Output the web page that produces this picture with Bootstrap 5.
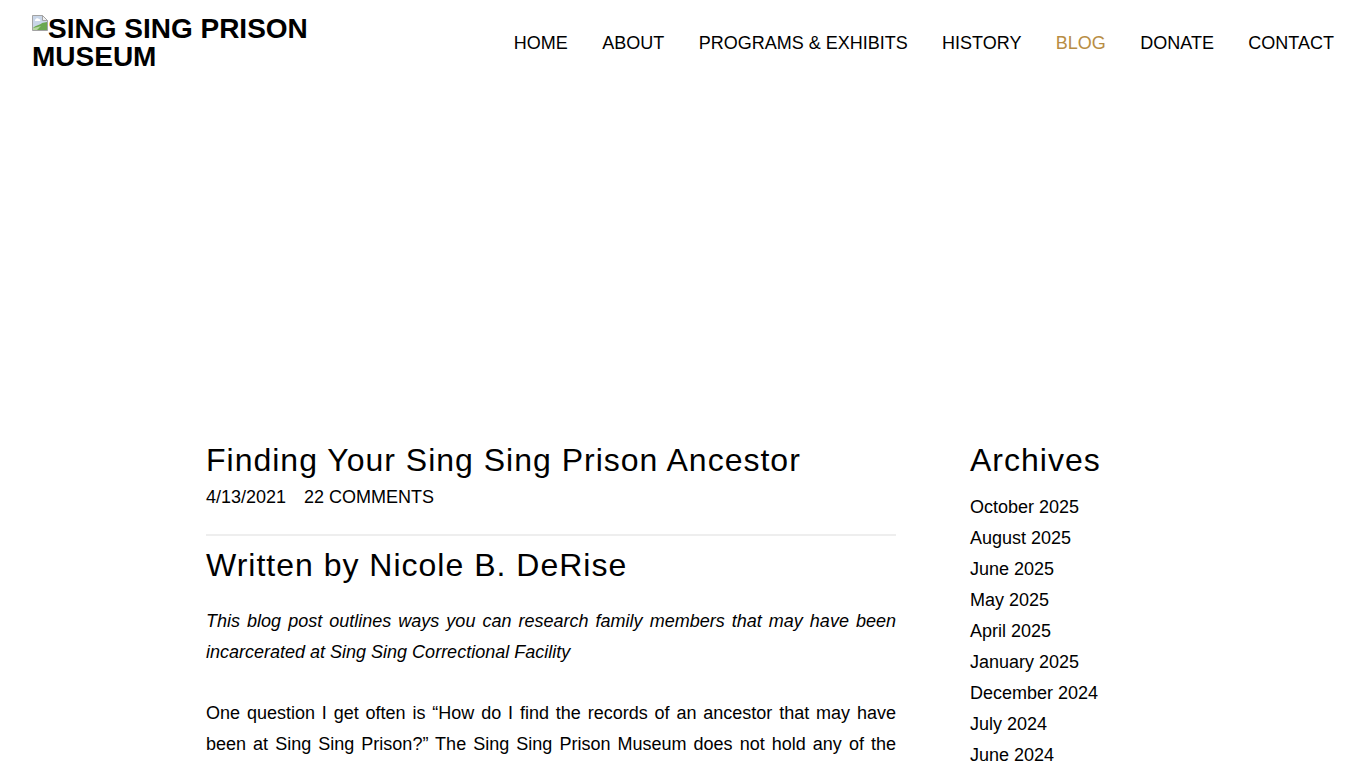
<!DOCTYPE html>
<html lang="en">
<head>
    <meta charset="UTF-8">
    <meta name="viewport" content="width=device-width, initial-scale=1.0">
    <title>Finding Your Sing Sing Prison Ancestor</title>
    <link href="https://cdn.jsdelivr.net/npm/bootstrap@5.3.2/dist/css/bootstrap.min.css" rel="stylesheet">
    <style>
        html, body {
            height: 768px;
            overflow: hidden;
        }
        body {
            font-family: "Liberation Sans", Arial, sans-serif;
            font-size: 18px;
            color: #000;
            background: #fff;
        }
        a {
            color: #000;
            text-decoration: none;
        }
        .site-head {
            height: 88px;
            padding: 15px 32px 0;
        }
        .site-logo {
            width: 300px;
            font-size: 28px;
            font-weight: 700;
            line-height: 28px;
            color: #000;
        }
        .site-logo svg {
            vertical-align: top;
        }
        .site-nav {
            gap: 34.4px;
            padding-top: 14px;
            line-height: 28px;
        }
        .site-nav .active-link {
            color: #b88d43;
        }
        .page-wrap {
            width: 954px;
            margin-left: 206px;
            padding-top: 352px;
        }
        .post-col {
            width: 690px;
        }
        .side-col {
            width: 190px;
        }
        .post-title {
            font-size: 32px;
            font-weight: 400;
            letter-spacing: 1px;
            line-height: 40px;
            margin: 0;
        }
        .post-meta {
            gap: 18px;
            line-height: 31px;
            margin-top: 2px;
            padding-bottom: 21px;
            border-bottom: 2px solid #eee;
        }
        .post-body {
            line-height: 31px;
            text-align: justify;
        }
        .post-body .post-title {
            margin: 9px 0 21px;
            text-align: left;
        }
        .post-body p {
            margin: 0 0 30px;
        }
        .post-body .para-cut {
            text-align-last: justify;
        }
        .archive-list {
            margin-top: 12px;
            line-height: 31px;
        }
    </style>
</head>
<body>
    <header class="site-head d-flex justify-content-between align-items-start">
        <a class="site-logo" href="#"><svg width="16" height="16" viewBox="0 0 16 16"><path d="M.5.5h10l5 5v10H.5z" fill="#c9d6e8" stroke="#a3a3a3"/><path d="M10.5.5v5h5z" fill="#f2f2f2" stroke="#a3a3a3"/><path d="M3 5c1-2 3-2 4-1 1 0 2 1 1 2H3z" fill="#fff"/><path d="M1 15v-2c3-3 7-3 9-5l5-1v8z" fill="#6aa84f"/><path d="M1 15v-2c3-1 6-1 8-2-2 2-3 3-4 4z" fill="#b5d6a0"/></svg>SING SING PRISON MUSEUM</a>
        <nav class="site-nav d-flex">
            <a href="#">HOME</a>
            <a href="#">ABOUT</a>
            <a href="#">PROGRAMS &amp; EXHIBITS</a>
            <a href="#">HISTORY</a>
            <a href="#" class="active-link">BLOG</a>
            <a href="#">DONATE</a>
            <a href="#">CONTACT</a>
        </nav>
    </header>

    <main class="page-wrap d-flex justify-content-between">
        <article class="post-col">
            <h2 class="post-title">Finding Your Sing Sing Prison Ancestor</h2>
            <div class="post-meta d-flex">
                <span>4/13/2021</span>
                <a href="#">22 COMMENTS</a>
            </div>
            <div class="post-body">
                <h2 class="post-title">Written by Nicole B. DeRise</h2>
                <p><em>This blog post outlines ways you can research family members that may have been incarcerated at Sing Sing Correctional Facility</em></p>
                <p class="para-cut">One question I get often is “How do I find the records of an ancestor that may have been at Sing Sing Prison?” The Sing Sing Prison Museum does not hold any of the</p>
            </div>
        </article>
        <aside class="side-col">
            <h2 class="post-title">Archives</h2>
            <div class="archive-list d-flex flex-column">
                <a href="#">October 2025</a>
                <a href="#">August 2025</a>
                <a href="#">June 2025</a>
                <a href="#">May 2025</a>
                <a href="#">April 2025</a>
                <a href="#">January 2025</a>
                <a href="#">December 2024</a>
                <a href="#">July 2024</a>
                <a href="#">June 2024</a>
            </div>
        </aside>
    </main>

    <script src="https://cdn.jsdelivr.net/npm/bootstrap@5.3.2/dist/js/bootstrap.bundle.min.js"></script>
</body>
</html>
